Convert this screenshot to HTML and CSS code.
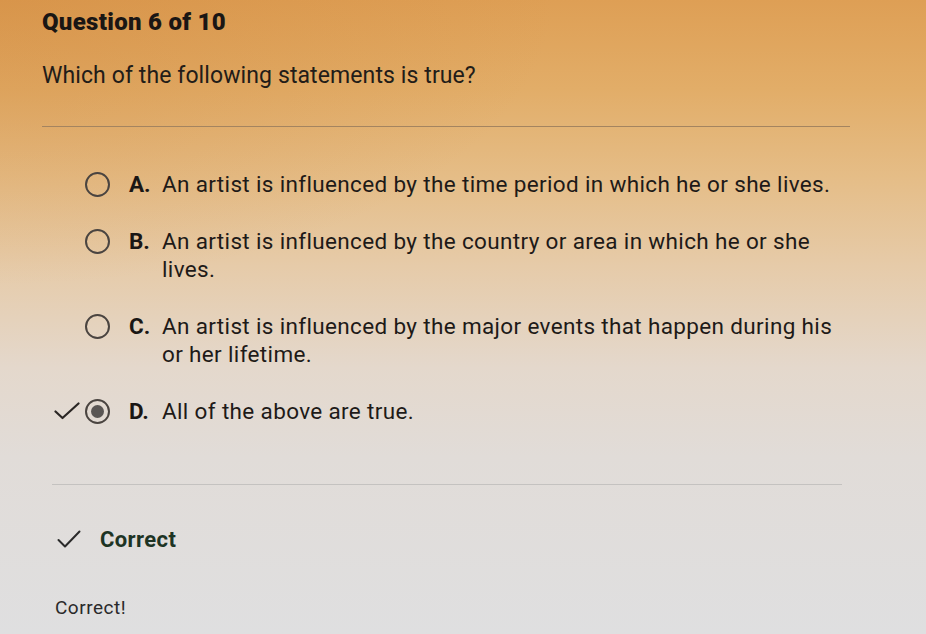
FILE: index.html
```html
<!DOCTYPE html>
<html lang="en">
<head>
<meta charset="utf-8">
<title>Question 6 of 10</title>
<link rel="stylesheet" href="styles.css">
</head>
<body>
<main class="quiz">
  <h1 class="q-num">Question 6 of 10</h1>
  <p class="q-text">Which of the following statements is true?</p>
  <hr class="rule rule-top">
  <ul class="options">
    <li class="option">
      <span class="mark"></span>
      <span class="radio"></span>
      <span class="letter">A.</span>
      <span class="text">An artist is influenced by the time period in which he or she lives.</span>
    </li>
    <li class="option">
      <span class="mark"></span>
      <span class="radio"></span>
      <span class="letter">B.</span>
      <span class="text">An artist is influenced by the country or area in which he or she lives.</span>
    </li>
    <li class="option">
      <span class="mark"></span>
      <span class="radio"></span>
      <span class="letter">C.</span>
      <span class="text">An artist is influenced by the major events that happen during his or her lifetime.</span>
    </li>
    <li class="option selected">
      <span class="mark"><svg viewBox="0 0 26 18" width="26" height="18"><path d="M1.5 9.5 L8.5 16 L24.5 1.5" fill="none" stroke="#2a2624" stroke-width="2.2" stroke-linecap="round" stroke-linejoin="round"/></svg></span>
      <span class="radio"><span class="dot"></span></span>
      <span class="letter">D.</span>
      <span class="text">All of the above are true.</span>
    </li>
  </ul>
  <hr class="rule rule-bottom">
  <div class="result">
    <svg class="result-check" viewBox="0 0 24 18" width="24" height="18"><path d="M1.5 10 L8 16.5 L22.5 1.5" fill="none" stroke="#2a2a2a" stroke-width="2" stroke-linecap="round" stroke-linejoin="round"/></svg>
    <span class="result-label">Correct</span>
  </div>
  <p class="feedback">Correct!</p>
</main>
</body>
</html>
```
FILE: styles.css
```css
html, body {
  margin: 0;
  padding: 0;
  height: 100%;
}
body {
  font-family: Roboto, "Liberation Sans", Arial, sans-serif;
  color: #1e1a18;
  background:
    radial-gradient(ellipse 60% 45% at 0% 0%, rgba(205, 130, 55, 0.35), rgba(205, 130, 55, 0) 100%),
    linear-gradient(180deg, #de9f55 0%, #e2ad68 14%, #e5bd87 28%, #e6cba9 42%, #e4d8cc 58%, #e1dcd8 72%, #dfdfe0 100%);
  overflow: hidden;
}
.quiz {
  padding: 8px 0 0 42px;
  width: 808px;
}
.q-num {
  margin: 0;
  font-size: 24px;
  font-weight: 900;
  line-height: 28px;
  letter-spacing: 0.3px;
  color: #1a1614;
}
.q-text {
  margin: 26px 0 0;
  font-size: 23px;
  line-height: 28px;
  letter-spacing: 0.1px;
  color: #221c18;
}
.rule {
  border: 0;
  height: 1px;
  margin: 0;
}
.rule-top {
  margin-top: 36px;
  background: #a48460;
}
.options {
  list-style: none;
  margin: 43px 0 0;
  padding: 0 0 0 12px;
  display: flex;
  flex-direction: column;
  gap: 29px;
}
.option {
  display: flex;
  align-items: flex-start;
  font-size: 22.5px;
  line-height: 28px;
  letter-spacing: 0.35px;
}
.mark {
  width: 26px;
  height: 28px;
  margin-right: 5px;
  display: flex;
  align-items: center;
  flex: none;
}
.radio {
  flex: none;
  box-sizing: border-box;
  width: 25px;
  height: 25px;
  margin-top: 2px;
  border: 2.5px solid #4a4440;
  border-radius: 50%;
  display: flex;
  align-items: center;
  justify-content: center;
}
.dot {
  width: 13px;
  height: 13px;
  border-radius: 50%;
  background: #5a5654;
}
.letter {
  flex: none;
  width: 33px;
  margin-left: 19px;
  font-weight: 700;
  letter-spacing: 0;
  color: #1a1614;
}
.text {
  max-width: 684px;
}
.rule-bottom {
  margin-top: 59px;
  margin-left: 10px;
  width: 790px;
  background: #c4c2c0;
}
.result {
  display: flex;
  align-items: center;
  margin: 40px 0 0 15px;
  height: 28px;
}
.result-check {
  flex: none;
}
.result-label {
  margin-left: 19px;
  font-size: 22px;
  font-weight: 700;
  letter-spacing: 0.4px;
  color: #1d3424;
}
.feedback {
  margin: 43px 0 0 13px;
  font-size: 19px;
  line-height: 24px;
  letter-spacing: 0.5px;
  color: #2a2a2a;
}
```
